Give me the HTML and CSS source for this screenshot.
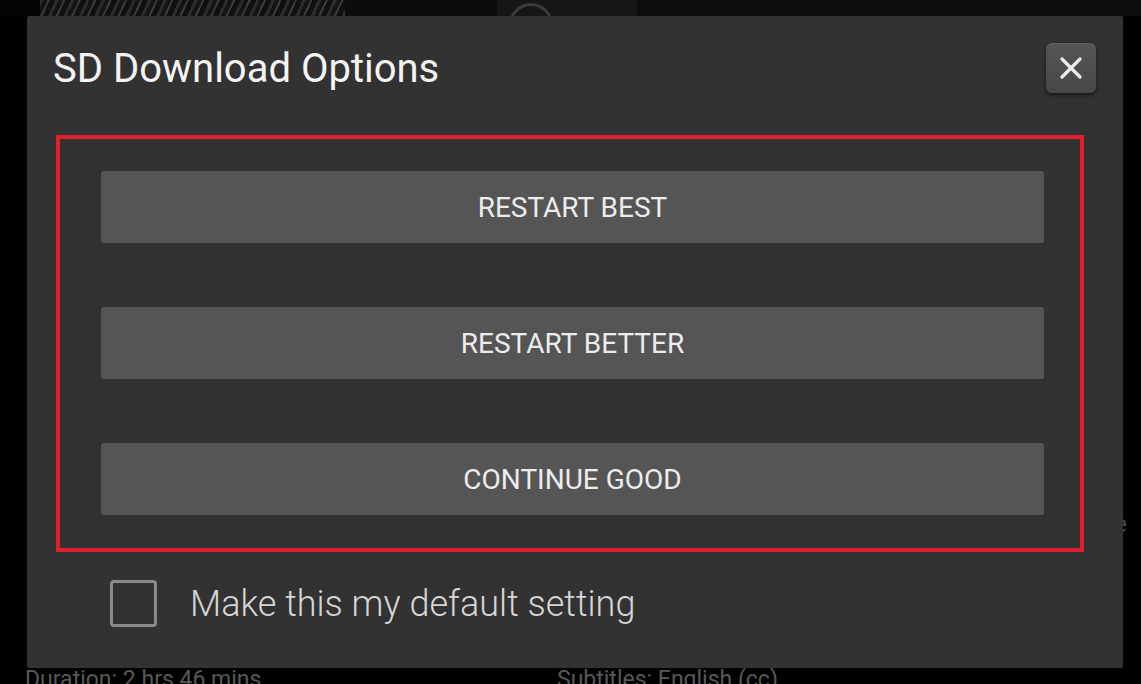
FILE: index.html
```html
<!DOCTYPE html>
<html lang="en">
<head>
<meta charset="utf-8">
<title>SD Download Options</title>
<link rel="stylesheet" href="styles.css">
</head>
<body>
<div class="page">
  <div class="top-strip">
    <div class="gutter"></div>
    <div class="poster"></div>
    <div class="dark-block"></div>
    <div class="tile"><div class="ring"></div></div>
    <div class="dark-rest"></div>
  </div>
  <div class="middle">
    <span class="side-text">e</span>
  </div>
  <div class="info-row">
    <span class="info duration">Duration: 2 hrs 46 mins</span>
    <span class="info subtitles">Subtitles: English (cc)</span>
  </div>
</div>

<div class="dialog" role="dialog" aria-labelledby="dlg-title">
  <div class="dialog-header">
    <h1 class="dialog-title" id="dlg-title">SD Download Options</h1>
    <button class="close-btn" aria-label="Close">
      <svg width="22" height="22" viewBox="0 0 22 22" aria-hidden="true">
        <path d="M2 2 L20 20 M20 2 L2 20" stroke="#ececec" stroke-width="3.2" stroke-linecap="round" fill="none"/>
      </svg>
    </button>
  </div>
  <div class="options-box">
    <button class="option-btn">Restart Best</button>
    <button class="option-btn">Restart Better</button>
    <button class="option-btn">Continue Good</button>
  </div>
  <label class="default-row">
    <span class="checkbox"></span>
    <span class="default-label">Make this my default setting</span>
  </label>
</div>
</body>
</html>
```

FILE: styles.css
```css
* { box-sizing: border-box; }

html, body {
  margin: 0;
  padding: 0;
  width: 1141px;
  height: 684px;
  overflow: hidden;
  background: #000;
  font-family: Roboto, "Noto Sans", "Liberation Sans", sans-serif;
}

.page {
  width: 1141px;
  height: 684px;
  display: flex;
  flex-direction: column;
}

.top-strip {
  height: 16px;
  display: flex;
}
.gutter { width: 40px; background: #050505; }
.poster {
  width: 305px;
  background: repeating-linear-gradient(115deg, #2c2c2c 0 3px, #141414 3px 7px, #3a3a3a 7px 9px, #101010 9px 14px);
}
.dark-block { width: 152px; background: #0c0c0c; }
.tile {
  width: 140px;
  background: #161616;
  position: relative;
  overflow: hidden;
}
.ring {
  position: absolute;
  left: 12px;
  top: 3px;
  width: 44px;
  height: 44px;
  border: 3px solid #3a3a3a;
  border-radius: 50%;
}
.dark-rest { flex: 1; background: #0d0d0d; }

.middle {
  flex: 1;
  display: flex;
  justify-content: flex-end;
  align-items: flex-end;
  padding: 0 14px 118px 0;
}
.side-text {
  color: #4a4a4a;
  font-size: 24px;
}

.info-row {
  height: 28px;
  display: flex;
  padding-left: 25px;
  padding-top: 10px;
}
.info {
  color: #585858;
  font-size: 23px;
  line-height: 28px;
  white-space: nowrap;
}
.duration { width: 532px; }

.dialog {
  position: absolute;
  left: 27px;
  top: 16px;
  width: 1096px;
  height: 652px;
  background: #323232;
  border-radius: 2px;
  display: flex;
  flex-direction: column;
}

.dialog-header {
  height: 119px;
  display: flex;
  justify-content: space-between;
  align-items: flex-start;
  padding: 27px 27px 0 26px;
}

.dialog-title {
  margin: 2px 0 0 0;
  font-size: 40px;
  font-weight: 400;
  color: #f4f4f4;
  line-height: 47px;
  letter-spacing: 0;
}

.close-btn {
  width: 50px;
  height: 50px;
  border: none;
  border-radius: 6px;
  background: linear-gradient(#555, #474747);
  box-shadow: 0 2px 4px rgba(0,0,0,0.55), inset 0 1px 0 rgba(255,255,255,0.08);
  display: flex;
  align-items: center;
  justify-content: center;
  padding: 0;
}

.options-box {
  margin-left: 29px;
  width: 1028px;
  height: 417px;
  border: 4px solid #e0212d;
  padding: 32px 36px 0 41px;
  display: flex;
  flex-direction: column;
  gap: 64px;
}

.option-btn {
  height: 72px;
  width: 943px;
  border: none;
  border-radius: 3px;
  background: #555555;
  color: #ececec;
  font-family: Roboto, "Noto Sans", "Liberation Sans", sans-serif;
  font-size: 28px;
  font-weight: 400;
  text-transform: uppercase;
  padding: 0;
}

.default-row {
  margin: 28px 0 0 83px;
  display: flex;
  align-items: center;
  gap: 33px;
}

.checkbox {
  width: 47px;
  height: 47px;
  border: 3px solid #8a8a8a;
  border-radius: 4px;
}

.default-label {
  font-size: 36px;
  font-weight: 300;
  color: #d6d6d6;
}
```
